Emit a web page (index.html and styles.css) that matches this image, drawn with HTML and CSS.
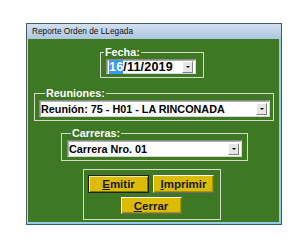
FILE: index.html
```html
<!DOCTYPE html>
<html lang="es">
<head>
  <meta charset="UTF-8">
  <title>Reporte Orden de LLegada</title>
  <link rel="stylesheet" href="styles.css">
</head>
<body>
  <div class="window">
    <div class="titlebar">Reporte Orden de LLegada</div>
    <div class="client">
      <fieldset class="group group-fecha">
        <legend>Fecha:</legend>
        <div class="field field-fecha">
          <span class="value"><span class="sel">16</span>/11/2019</span>
          <span class="drop"><i></i></span>
        </div>
      </fieldset>

      <fieldset class="group group-reuniones">
        <legend>Reuniones:</legend>
        <div class="field field-reuniones">
          <span class="value">Reunión: 75 - H01 - LA RINCONADA</span>
          <span class="drop"><i></i></span>
        </div>
      </fieldset>

      <fieldset class="group group-carreras">
        <legend>Carreras:</legend>
        <div class="field field-carreras">
          <span class="value">Carrera Nro. 01</span>
          <span class="drop"><i></i></span>
        </div>
      </fieldset>

      <fieldset class="group group-botones">
        <div class="row">
          <button class="btn btn-default"><u>E</u>mitir</button>
          <button class="btn"><u>I</u>mprimir</button>
        </div>
        <div class="row">
          <button class="btn"><u>C</u>errar</button>
        </div>
      </fieldset>
    </div>
  </div>
</body>
</html>
```

FILE: styles.css
```css
body {
  margin: 0;
  background: #ffffff;
  font-family: "Liberation Sans", Arial, sans-serif;
}
.window {
  margin: 23px 0 0 26px;
  width: 254px;
  border: 1px solid #4c5a66;
  border-right-color: #2f5f78;
  border-bottom-color: #2f5f78;
}
.titlebar {
  height: 15px;
  line-height: 14px;
  padding-left: 5px;
  font-size: 8.3px;
  color: #101010;
  background: linear-gradient(#d2e0f0, #aec6e2);
}
.client {
  background: #3e7823;
  border-left: 1px solid #c9d6e2;
  border-right: 2px solid #93cbe8;
  border-bottom: 2px solid #93cbe8;
  height: 185px;
  padding-top: 7px;
  box-sizing: border-box;
}
.group {
  margin: 0;
  padding: 0;
  border: 1px solid #d2dcc8;
  box-sizing: border-box;
}
.group legend {
  padding: 0 1px;
  margin-left: 2px;
  color: #ffffff;
  font-weight: bold;
  font-size: 10.8px;
  line-height: 13px;
}
.group-fecha {
  margin-left: 72px;
  width: 104px;
  height: 32px;
  padding: 0 0 0 5px;
}
.group-fecha legend {
  margin-left: -2px;
}
.group-reuniones {
  margin: 9px 0 0 6px;
  width: 240px;
  height: 34px;
  padding: 0 0 0 4px;
}
.group-reuniones legend {
  margin-left: 6px;
}
.group-carreras {
  margin: 6px 0 0 33px;
  width: 187px;
  height: 34px;
  padding: 0 0 0 5px;
}
.group-carreras legend {
  margin-left: 4px;
}
.group-botones {
  margin: 8px 0 0 55px;
  width: 138px;
  height: 51px;
  padding: 5px 0 0 4px;
}
.field {
  display: flex;
  align-items: center;
  background: #ffffff;
  border: 1px solid #8a8a8a;
  border-right-color: #d8d8d8;
  border-bottom-color: #d8d8d8;
  box-shadow: inset 1px 1px 0 #b0b0b0;
  box-sizing: border-box;
  color: #000000;
  font-weight: bold;
}
.field .value {
  flex: 1;
  white-space: nowrap;
  overflow: hidden;
}
.field-fecha {
  width: 90px;
  height: 15px;
  padding-left: 2px;
  font-size: 12.5px;
  letter-spacing: 0.2px;
}
.field-fecha .sel {
  background: #3399ff;
  color: #ffffff;
}
.field-reuniones {
  width: 231px;
  height: 17px;
  padding-left: 1px;
  font-size: 10.8px;
}
.field-carreras {
  width: 175px;
  height: 17px;
  padding-left: 1px;
  font-size: 10.8px;
}
.drop {
  width: 11px;
  height: 12px;
  margin-right: 2px;
  background: #e6e6e6;
  border: 1px solid #ffffff;
  border-right-color: #808080;
  border-bottom-color: #808080;
  box-sizing: border-box;
  display: flex;
  align-items: center;
  justify-content: center;
}
.drop i {
  width: 0;
  height: 0;
  border-left: 2px solid transparent;
  border-right: 2px solid transparent;
  border-top: 2px solid #000000;
}
.row {
  display: flex;
  justify-content: center;
  gap: 4px;
  width: 126px;
}
.row + .row {
  margin-top: 4px;
}
.btn {
  width: 61px;
  height: 18px;
  padding: 0;
  background: #dcbc00;
  border: 1px solid #ffffff;
  border-right-color: #6a6a6a;
  border-bottom-color: #6a6a6a;
  box-shadow: inset -1px -1px 0 #a89000;
  font-family: "Liberation Sans", Arial, sans-serif;
  font-weight: bold;
  font-size: 11.5px;
  color: #1a1a1a;
}
.row + .row .btn {
  height: 17px;
}
.btn-default {
  border: 1px solid #202020;
  box-shadow: inset 1px 1px 0 #f4e8a0, inset -1px -1px 0 #807000;
}
```
